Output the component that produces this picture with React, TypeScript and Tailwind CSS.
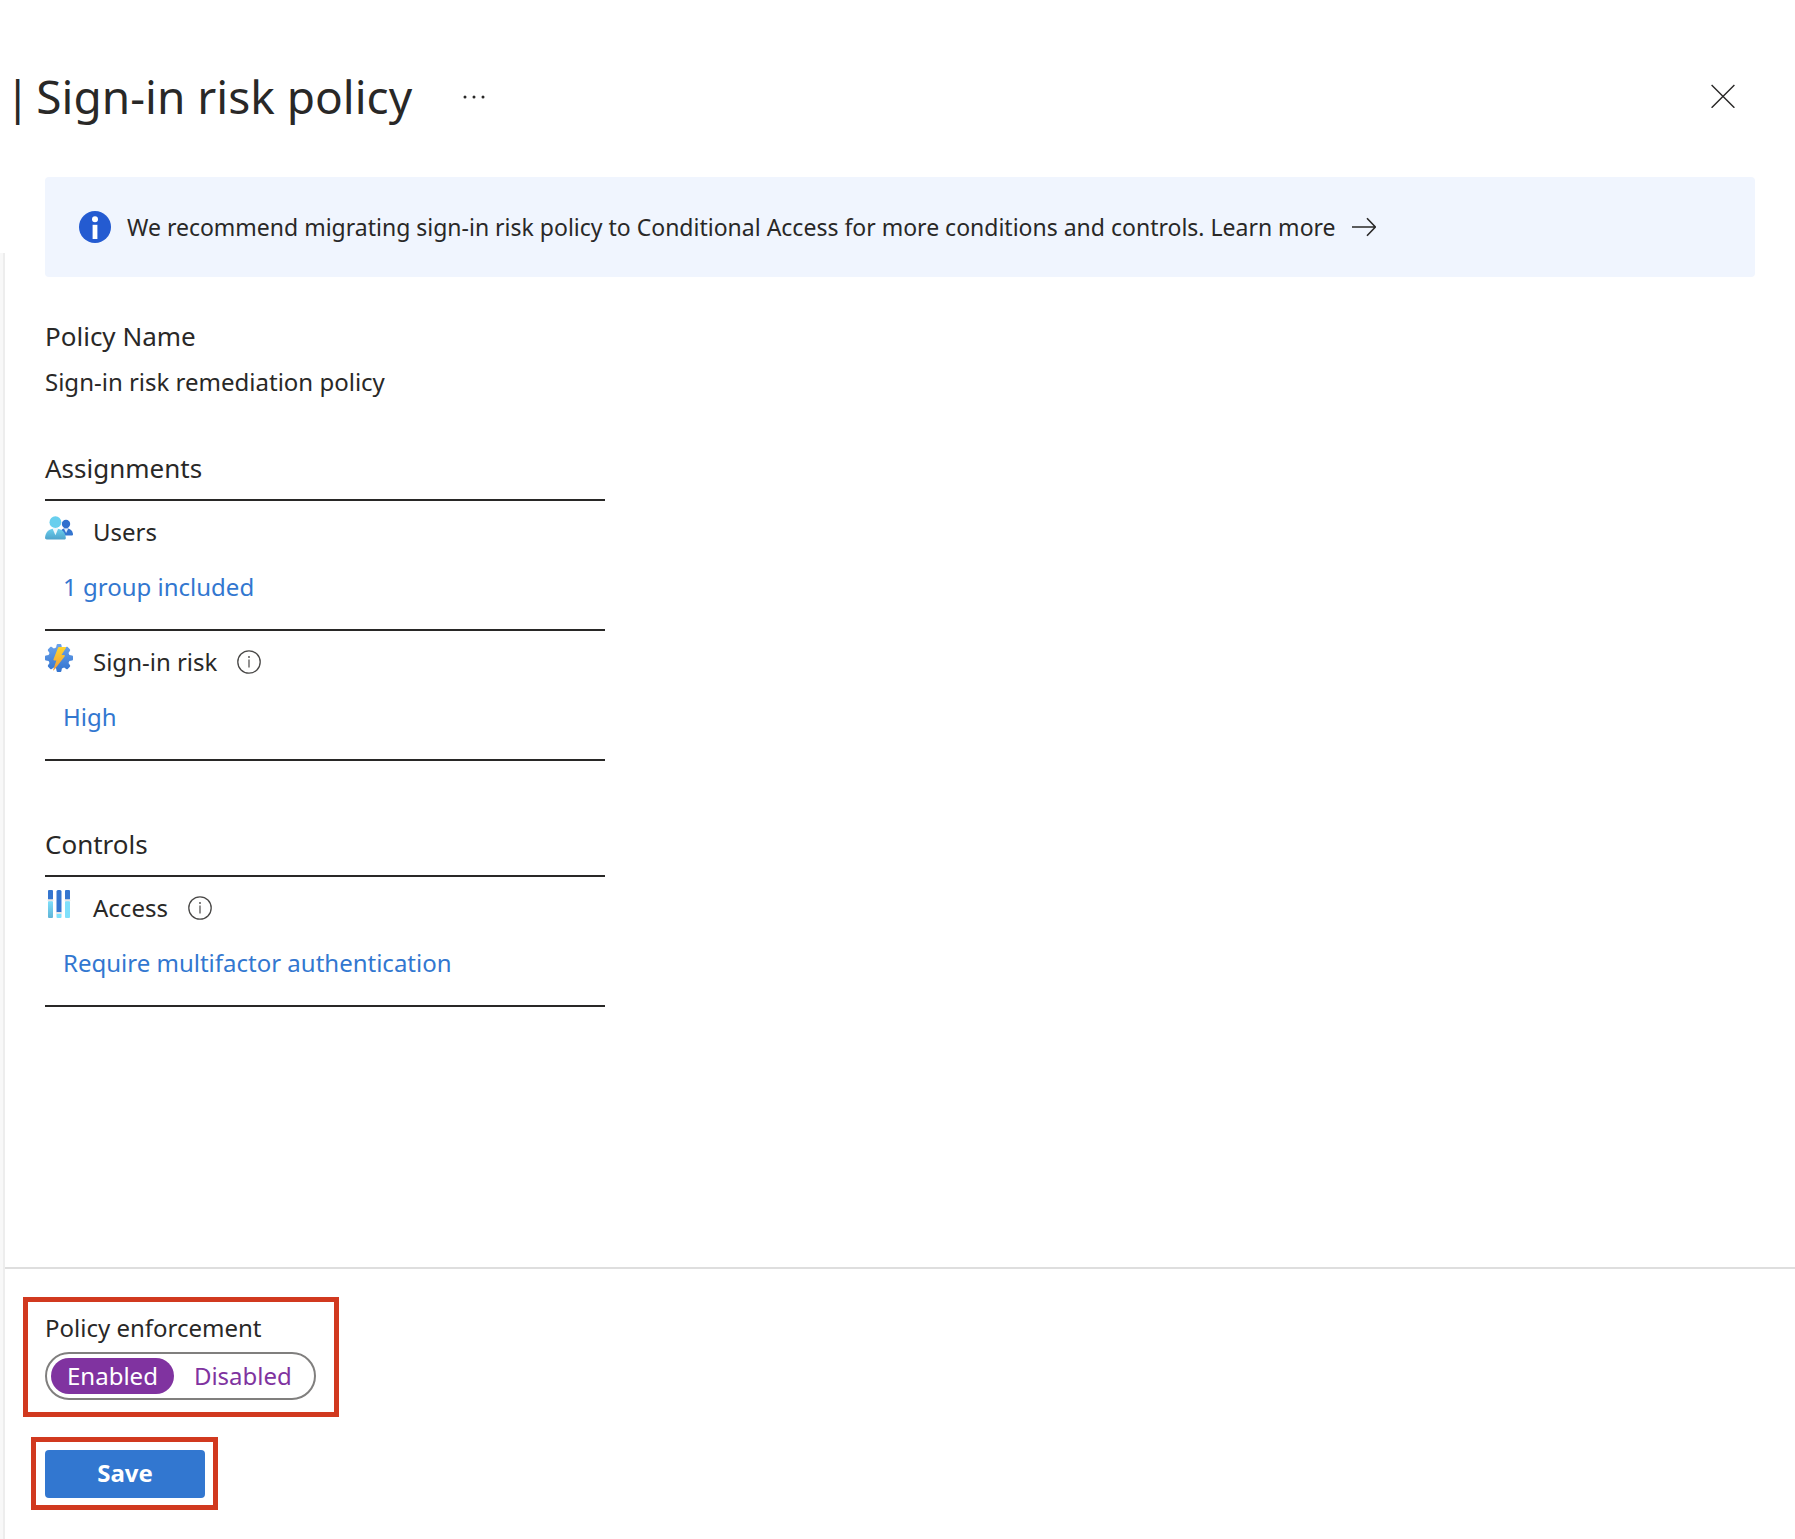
import { useState } from "react";
import type { ReactNode } from "react";

function CloseIcon() {
  return (
    <svg width="24" height="24" viewBox="0 0 24 24" fill="none" stroke="#292827" strokeWidth="1.4" aria-hidden="true">
      <path d="M.6 1 23.400 23.800M23.400 1 .6 23.800" />
    </svg>
  );
}

function MoreIcon() {
  return (
    <svg width="24" height="24" viewBox="0 0 24 24" fill="#292827" aria-hidden="true">
      <circle cx="3" cy="13" r="1.5" />
      <circle cx="12" cy="13" r="1.5" />
      <circle cx="21" cy="13" r="1.5" />
    </svg>
  );
}

function InfoFilledIcon() {
  return (
    <svg width="32" height="32" viewBox="0 0 32 32" className="shrink-0" aria-hidden="true">
      <circle cx="16" cy="16" r="16" fill="#245bd1" />
      <circle cx="16" cy="8.3" r="3" fill="#fff" />
      <path d="M13.6 13.8h4.8V28h-4.8z" fill="#fff" />
    </svg>
  );
}

function InfoIcon() {
  return (
    <svg width="24" height="24" viewBox="0 0 24 24" fill="none" stroke="#4a4948" aria-hidden="true">
      <circle cx="12" cy="12" r="11.2" strokeWidth="1.3" />
      <path d="M12 9.6v8" strokeWidth="1.2" />
      <circle cx="12" cy="7" r=".9" fill="#4a4948" stroke="none" />
    </svg>
  );
}

function ArrowIcon() {
  return (
    <svg width="24" height="20" viewBox="0 0 24 20" fill="none" stroke="#292827" strokeWidth="1.6" aria-hidden="true">
      <path d="M0 10h23M15 1.2 23.4 10 15 18.8" />
    </svg>
  );
}

function UsersIcon() {
  return (
    <svg width="28" height="28" viewBox="0 -2 28 28" className="shrink-0" aria-hidden="true">
      <defs>
        <linearGradient id="front" x1="0" y1="0" x2="0" y2="1">
          <stop offset="0" stopColor="#6bd0ee" />
          <stop offset="1" stopColor="#4fa3cb" />
        </linearGradient>
      </defs>
      <circle cx="21" cy="8" r="4.2" fill="#2f6fcd" />
      <path d="M14.5 19.5c.2-4.6 2.4-7.3 6.5-7.3 4.3 0 6.600 2.600 7 5.800.1 1-.5 1.500-1.300 1.500z" fill="#3475cf" />
      <path d="m18.900 12.400 2.200 4.600 2.200-4.600z" fill="#e3eefa" />
      <path d="M1.800 23.500c-1.200 0-1.900-.7-1.800-1.800.5-5.300 3.600-9.200 10.400-9.200s9.900 3.900 10.400 9.200c.1 1.100-.6 1.800-1.800 1.800z" fill="url(#front)" />
      <path d="m7.200 11.800 3.200 7.500 3.200-7.500z" fill="#eef8fc" />
      <circle cx="10.400" cy="6.200" r="5.900" fill="#68cfee" />
    </svg>
  );
}

function RiskIcon() {
  return (
    <svg width="28" height="28" viewBox="0 0 28 28" className="shrink-0" aria-hidden="true">
      <defs>
        <linearGradient id="gear" gradientUnits="userSpaceOnUse" x1="0" y1="0" x2="0" y2="28">
          <stop offset="0" stopColor="#6ca4ec" />
          <stop offset="1" stopColor="#3273cf" />
        </linearGradient>
        <linearGradient id="bolt" x1="0" y1="0" x2="0" y2="1">
          <stop offset="0" stopColor="#ffd52e" />
          <stop offset="1" stopColor="#f09a3c" />
        </linearGradient>
      </defs>
      <path
        d="M11.6 1c.1-.6.500-1 1-1h2.800c.5 0 .9.400 1 1l.5 2.600 2.200.9L21.300 3c.5-.3 1-.3 1.400.1l2.200 2.200c.4.400.4.900.1 1.400l-1.500 2.200.9 2.200 2.600.5c.6.100 1 .500 1 1v2.800c0 .5-.4.900-1 1l-2.600.5-.9 2.200 1.500 2.200c.3.500.3 1-.1 1.400l-2.200 2.200c-.4.400-.9.400-1.400.1l-2.200-1.500-2.200.9-.5 2.600c-.1.600-.5 1-1 1h-2.800c-.5 0-.9-.4-1-1l-.5-2.600-2.200-.9L6.700 25c-.5.300-1 .3-1.400-.1l-2.200-2.200c-.4-.4-.4-.9-.1-1.400l1.500-2.200-.9-2.200L1 16.400c-.6-.1-1-.5-1-1v-2.800c0-.5.400-.9 1-1l2.600-.5.9-2.200L3 6.700c-.3-.5-.3-1 .1-1.400l2.200-2.200C5.700 2.700 6.200 2.700 6.700 3l2.200 1.500 2.200-.9z"
        fill="url(#gear)"
      />
      <path d="M14 3h6.200c.7 0 1 .6.600 1.200L16.500 11h2.600c.8 0 1.100.8.500 1.400L8.900 26.200c-.4.400-.9.100-.7-.4l3.200-9.400H9.300c-.7 0-1.100-.6-.8-1.200L13 3.700c.2-.4.500-.7 1-.7z" fill="url(#bolt)" />
    </svg>
  );
}

function AccessIcon() {
  return (
    <svg width="28" height="28" viewBox="0 0 28 28" className="shrink-0" aria-hidden="true">
      <defs>
        <linearGradient id="track" x1="0" y1="0" x2="0" y2="1">
          <stop offset="0" stopColor="#7fe0fb" />
          <stop offset="1" stopColor="#5fb3d6" />
        </linearGradient>
      </defs>
      <rect x="3" y="0" width="5" height="10" rx="1" fill="#3475cf" />
      <rect x="3" y="11" width="5" height="17" rx="1" fill="url(#track)" />
      <rect x="2.500" y="9.200" width="6" height="2" rx="1" fill="#e6e6e6" />
      <rect x="11.500" y="0" width="5" height="23" rx="1.500" fill="#3475cf" />
      <rect x="11.500" y="23.500" width="5" height="4.500" rx="1" fill="#7fe0fb" />
      <rect x="11" y="22" width="6" height="2" rx="1" fill="#e6e6e6" />
      <rect x="20" y="0" width="5" height="10" rx="1" fill="#3475cf" />
      <rect x="20" y="11" width="5" height="17" rx="1" fill="#7fe0fb" />
      <rect x="19.500" y="9.200" width="6" height="2" rx="1" fill="#e6e6e6" />
    </svg>
  );
}

function Setting({ icon, name, value, info }: { icon: ReactNode; name: string; value: string; info?: boolean }) {
  return (
    <div className="border-b-2 border-[#292827] pt-[13px] pb-[26px]">
      <div className="flex items-start">
        {icon}
        <div className="flex items-center gap-5 pt-0.5 pl-5">
          <h3 className="text-2xl leading-8">{name}</h3>
          {info && (
            <button type="button" aria-label={`About ${name}`}>
              <InfoIcon />
            </button>
          )}
        </div>
      </div>
      <a href="#" className="mt-[23px] ml-[18px] block w-fit text-2xl leading-8 text-[#3277d0]">
        {value}
      </a>
    </div>
  );
}

function Group({ title, children }: { title: string; children: ReactNode }) {
  return (
    <section className="max-w-[560px]">
      <h2 className="border-b-2 border-[#292827] pb-[13px] text-[26px] leading-9">{title}</h2>
      {children}
    </section>
  );
}

const options = ["Enabled", "Disabled"];

export default function App() {
  const [enforcement, setEnforcement] = useState("Enabled");

  return (
    <div className="flex min-h-screen flex-col bg-white font-['Noto_Sans',sans-serif] text-[#292827]">
      <header className="flex items-center pt-16 pr-[60px] pb-[49px] pl-[5px]">
        <h1 className="flex gap-1.5 text-[46px] leading-[64px]">
          <span>|</span>
          <span>Sign-in risk policy</span>
        </h1>
        <button type="button" aria-label="More actions" className="ml-[50px]">
          <MoreIcon />
        </button>
        <button type="button" aria-label="Close" className="ml-auto">
          <CloseIcon />
        </button>
      </header>

      <div className="flex grow">
        <div className="mt-[76px] w-[5px] shrink-0 border-r-2 border-[#ededed] bg-[#f8f8f8]" />
        <div className="flex grow flex-col">
          <main className="grow px-10">
            <div className="flex h-[100px] items-center rounded bg-[#f0f5fe] pl-[34px]">
              <InfoFilledIcon />
              <p className="ml-4 text-[23px] leading-8">
                We recommend migrating sign-in risk policy to Conditional Access for more conditions and controls.{" "}
                <a href="#" className="inline-flex items-center gap-4">
                  Learn more
                  <ArrowIcon />
                </a>
              </p>
            </div>

            <h2 className="mt-[41px] text-[26px] leading-9">Policy Name</h2>
            <p className="mt-3 mb-[52px] text-2xl leading-8">Sign-in risk remediation policy</p>

            <div className="flex flex-col gap-[65px]">
              <Group title="Assignments">
                <Setting icon={<UsersIcon />} name="Users" value="1 group included" />
                <Setting icon={<RiskIcon />} name="Sign-in risk" value="High" info />
              </Group>
              <Group title="Controls">
                <Setting icon={<AccessIcon />} name="Access" value="Require multifactor authentication" info />
              </Group>
            </div>
          </main>

          <footer className="flex flex-col items-start border-t-2 border-[#dedede] pt-7 pb-[29px]">
            <fieldset className="ml-[18px] border-5 border-[#d1391f] pt-[10px] pr-[18px] pb-3 pl-[17px]">
              <legend className="float-left w-full text-2xl leading-8">Policy enforcement</legend>
              <div className="clear-both flex pt-2">
                <div className="flex h-12 items-center gap-1 rounded-full border-2 border-[#807f7e] pr-[6px] pl-1">
                  {options.map((option) => (
                    <label
                      key={option}
                      className="flex h-9 cursor-pointer items-center rounded-full px-4 text-2xl leading-8 text-[#8033a0] has-checked:bg-[#8033a0] has-checked:text-white"
                    >
                      <input
                        type="radio"
                        name="enforcement"
                        value={option}
                        checked={enforcement === option}
                        onChange={() => setEnforcement(option)}
                        className="sr-only"
                      />
                      {option}
                    </label>
                  ))}
                </div>
              </div>
            </fieldset>
            <div className="mt-5 ml-[26px] border-5 border-[#d1391f] pt-2 pr-2 pb-[7px] pl-[9px]">
              <button type="button" className="h-12 w-40 rounded bg-[#3277d0] pb-0.5 text-2xl leading-8 font-bold text-white">
                Save
              </button>
            </div>
          </footer>
        </div>
      </div>
    </div>
  );
}
